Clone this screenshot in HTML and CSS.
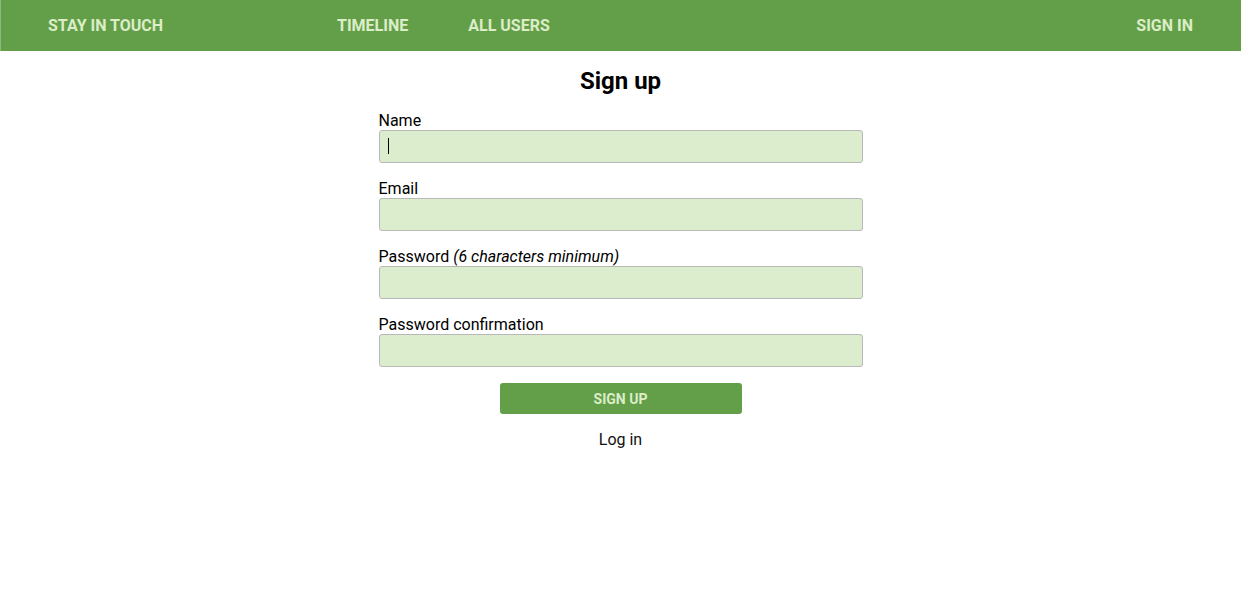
FILE: index.html
```html
<!DOCTYPE html>
<html lang="en">
<head>
<meta charset="utf-8">
<title>Sign up</title>
<link rel="stylesheet" href="styles.css">
</head>
<body>
<nav class="navbar">
  <a class="nav-brand" href="#">STAY IN TOUCH</a>
  <div class="nav-links">
    <a class="nav-link" href="#">TIMELINE</a>
    <a class="nav-link" href="#">ALL USERS</a>
  </div>
  <a class="nav-link nav-signin" href="#">SIGN IN</a>
</nav>
<main class="content">
  <h1 class="title">Sign up</h1>
  <form class="form">
    <div class="field">
      <label class="label">Name</label>
      <div class="input-wrap">
        <input class="input" type="text">
        <span class="caret"></span>
      </div>
    </div>
    <div class="field">
      <label class="label">Email</label>
      <input class="input" type="email">
    </div>
    <div class="field">
      <label class="label">Password <em>(6 characters minimum)</em></label>
      <input class="input" type="password">
    </div>
    <div class="field field-last">
      <label class="label">Password confirmation</label>
      <input class="input" type="password">
    </div>
    <button class="btn" type="button">SIGN UP</button>
    <a class="login" href="#">Log in</a>
  </form>
</main>
</body>
</html>
```

FILE: styles.css
```css
* { box-sizing: border-box; }
html, body { margin: 0; padding: 0; background: #fff; }
body {
  font-family: Roboto, "Liberation Sans", sans-serif;
  color: #000;
}
.navbar {
  height: 51px;
  background: #639f48;
  border-left: 1px solid #8fb77c;
  display: flex;
  align-items: center;
  padding: 0 48px 0 47px;
}
.navbar a {
  color: #dcedc8;
  text-decoration: none;
  font-weight: 700;
  font-size: 16px;
  letter-spacing: 0;
}
.nav-brand { width: 289px; }
.nav-links { display: flex; gap: 60px; flex: 1; }
.content {
  display: flex;
  flex-direction: column;
  align-items: center;
}
.title {
  font-size: 24px;
  font-weight: 700;
  margin: 16px 0 17px;
  line-height: 28px;
}
.form {
  width: 484px;
  display: flex;
  flex-direction: column;
}
.field {
  display: flex;
  flex-direction: column;
  margin-bottom: 17px;
}
.field-last { margin-bottom: 16px; }
.label {
  font-size: 16px;
  line-height: 18px;
}
.label em { font-style: italic; }
.input-wrap { position: relative; display: flex; flex-direction: column; }
.input {
  height: 33px;
  width: 100%;
  background: #dcedcd;
  border: 1px solid #b8b8b8;
  border-radius: 3px;
  outline: none;
  font-size: 16px;
  padding: 0 8px;
}
.caret {
  position: absolute;
  left: 9px;
  top: 8px;
  width: 1px;
  height: 16px;
  background: #000;
}
.btn {
  align-self: center;
  width: 242px;
  height: 31px;
  background: #639f48;
  color: #dcedc8;
  border: none;
  border-radius: 3px;
  font-family: Roboto, "Liberation Sans", sans-serif;
  font-weight: 700;
  font-size: 14px;
}
.login {
  align-self: center;
  margin-top: 16px;
  font-size: 16px;
  color: #111;
  text-decoration: none;
}
```
